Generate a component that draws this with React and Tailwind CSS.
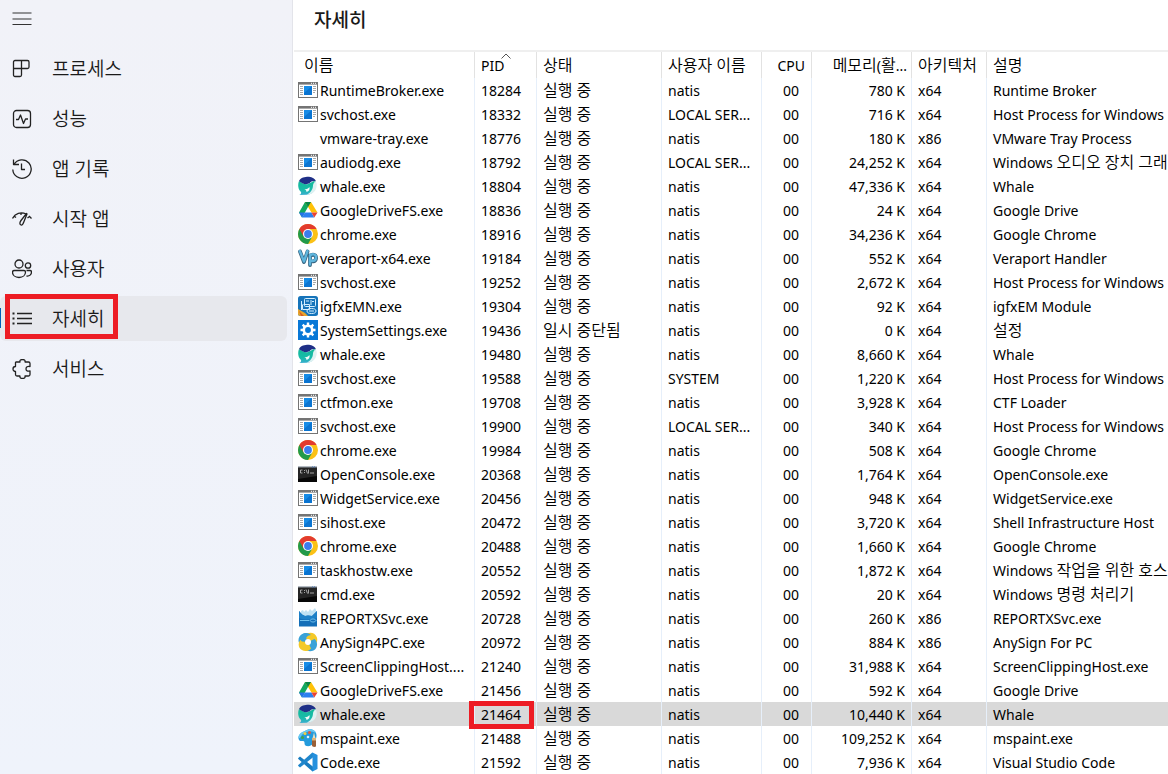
import React from "react";

function AppIcon({ kind }) {
  const common = { width: 20, height: 20, viewBox: "0 0 20 20", className: "block shrink-0", "aria-hidden": true };
  switch (kind) {
    case "exe":
      return (
        <svg {...common}>
          <rect x="0.5" y="2.5" width="19" height="15" fill="#fff" stroke="#747474" />
          <rect x="0" y="2" width="20" height="2.6" fill="#747474" />
          <path d="M13 3.3h1M15 3.3h1M17 3.3h1" stroke="#fff" strokeWidth="1" />
          <path d="M2 6.500h3M2 8.500h3M2 10.500h3M2 12.500h3M2 14.500h3M15 6.500h3M15 8.500h3M15 10.500h3M15 12.500h2" stroke="#a8a8a8" />
          <rect x="6" y="6" width="8" height="9" fill="#0a74d1" />
          <path d="M6 6h8l-8 7z" fill="#168be6" />
        </svg>
      );
    case "whale":
      return (
        <svg {...common}>
          <defs>
            <linearGradient id="whaleBody" x1="0" y1="0" x2="0" y2="1">
              <stop offset="0" stopColor="#12b99a" />
              <stop offset="0.6" stopColor="#19bba8" />
              <stop offset="1" stopColor="#3aaed0" />
            </linearGradient>
          </defs>
          <path d="M1 5C4 7 7 9 10 8L16 5L18 6C18.500 13 15 18.800 9 18.800L1 19C2.500 18.500 3.500 17.500 3 16C-.3 13 -.3 8 1 5z" fill="url(#whaleBody)" />
          <path d="M8.500 18.800C12 17.300 14.800 14 15 9.500C15 8 16 6.500 17.500 5.500C19 7 19 9.500 18.300 12C17 16.500 13 18.900 8.500 18.800z" fill="#dff1f2" />
          <path d="M6.500 13C8.500 13.500 10.500 12.500 11.500 11C12 13.500 11 15.500 8.500 16C8.500 14.800 7.800 13.800 6.500 13z" fill="#f4fbfb" />
          <path d="M1 5C3 1.300 7.500 .7 11 .8C14.500 1 17 3 18 5.300C15 4.500 13 5.500 11.500 7.300C8.500 9 4 8 1 5z" fill="#1f2f87" />
        </svg>
      );
    case "drive":
      return (
        <svg {...common}>
          <path d="M7 2L13 2L10 7L4 17.500L1 12.500z" fill="#12a861" />
          <path d="M7 2h6l6.500 10.500h-6z" fill="#ffc107" />
          <path d="M1 12.500L4 17.500L7 12.500z" fill="#2673e8" />
          <path d="M7 12.500h6.500L16.300 17.500H4z" fill="#2d7ff0" />
          <path d="M13.500 12.500h6L16.300 17.500z" fill="#ea4335" />
          <path d="M7 2h6l-3 5z" fill="#078646" />
        </svg>
      );
    case "chrome":
      return (
        <svg {...common}>
          <circle cx="10" cy="10" r="10" fill="#fbc116" />
          <path d="M10 10L14.330 12.500L10 20A10 10 0 0 1 1.340 5z" fill="#229a4a" />
          <path d="M10 5H18.660A10 10 0 0 0 1.340 5L5.670 12.500L10 10z" fill="#e33b2e" />
          <circle cx="10" cy="10" r="5" fill="#fff" />
          <circle cx="10" cy="10" r="3.900" fill="#3b7ded" />
        </svg>
      );
    case "vp":
      return (
        <svg {...common}>
          <g fill="none" strokeLinecap="round" strokeLinejoin="round">
            <path d="M2 3.500L6 14L9.500 3.500M12 7.500V17M12 8.500C14 5.500 18.500 6.500 18 10.500C17.500 14 14 14 12 12.500" stroke="#35627e" strokeWidth="3.800" />
            <path d="M1.800 3L6 13.500L9.500 3M12 7V16.500M12 8C14 5 18.500 6 18 10C17.500 13.500 14 13.500 12 12" stroke="#5fb5dc" strokeWidth="2.400" />
          </g>
        </svg>
      );
    case "igfx":
      return (
        <svg {...common}>
          <rect width="20" height="20" rx="2.500" fill="#1674ba" />
          <path d="M0 13L7 17L10 20H2.500A2.500 2.500 0 0 1 0 17.500z" fill="#e7a52c" />
          <path d="M1 15l5 5H3z" fill="#d85a27" />
          <g fill="none" stroke="#d5efff">
            <rect x="6.500" y="2.500" width="11" height="8" rx="1" />
            <path d="M3.500 5v9M5.500 8.500h6v5h-7v-5M13 4v5M14 5.500h2M8 5h3" />
            <ellipse cx="13.500" cy="15" rx="4.500" ry="2.500" />
            <path d="M11 15h5" />
          </g>
        </svg>
      );
    case "settings":
      return (
        <svg {...common}>
          <rect width="20" height="20" fill="#0878d7" />
          <circle cx="10" cy="10" r="4.200" fill="none" stroke="#fff" strokeWidth="2.600" />
          <path d="M10 2.500v3M10 14.500v3M2.500 10h3M14.500 10h3M4.700 4.700l2.100 2.100M13.200 13.200l2.100 2.100M4.700 15.300l2.100-2.100M13.200 6.800l2.100-2.100" stroke="#fff" strokeWidth="2.400" />
        </svg>
      );
    case "console":
      return (
        <svg {...common}>
          <rect x="0" y="2" width="19" height="16" fill="#080808" />
          <path d="M0 2h19v1.500H0z" fill="#b5bcc4" />
          <path d="M14 3h1M16 3h1" stroke="#3e6eb0" />
          <path d="M19 4v8L0 15V4z" fill="#252525" />
          <path d="M4.500 6H2.500v3h2M6 6.500h1M6 8.500h1M8 5.500l1.500 4M10.500 5.500v4M12 9h4" fill="none" stroke="#c4c4c4" strokeWidth=".8" />
        </svg>
      );
    case "report":
      return (
        <svg {...common}>
          <path d="M3 6V3l2-1 1 2 2-2 2 2 2-3 2 2 3-3 1 2v10H3z" fill="#bfe2f4" />
          <path d="M1 3L4 6.500L7 8L10 7.500L14 8L19 3V18.500H1z" fill="#146fb8" />
          <path d="M1 3L4 6.500L7 8L10 7.500L14 8L19 3V10C12 12 6 12 1 10z" fill="#1e81c8" />
          <path d="M2 12.500h9M12 12.500c1-2 5-2 6 0c-1 2-5 2-6 0z" fill="none" stroke="#72c1ed" />
        </svg>
      );
    case "anysign":
      return (
        <svg {...common}>
          <path d="M10 10L3 13.500C-1 10 0 4 4.500 2C7.500 .2 11 .8 13 3L14 6z" fill="#39a2d8" />
          <path d="M10 10L7 3.500C10.500-.8 17 .5 18.700 5C20 8 19 11.500 16.500 13.500z" fill="#f4c928" />
          <path d="M10 10L16.500 7C20.500 10.500 19.500 16.500 15.500 18.500C12.500 19.800 9 19.300 7 17z" fill="#39a2d8" />
          <path d="M10 10L13 16.500C9.500 20.500 3.500 19.500 1.300 15.500C0 12.500 .8 9 3.500 6.800z" fill="#f4c928" />
          <path d="M10 10L4 9.500C1.500 8 1.500 4.500 4.500 2C7.500 .2 11 .8 13 3C9.500 3.500 8 5 7.500 8z" fill="#39a2d8" />
          <circle cx="10" cy="10" r="3" fill="#fff" />
        </svg>
      );
    case "paint":
      return (
        <svg {...common}>
          <path d="M7 3C12-1 19 2 18.500 8C18 14 14 19 8.500 18C5 17 8 13.500 5 13C2 13.500 0 12 .5 9C1 6 4 4 7 3z" fill="#249bdc" />
          <path d="M2 10c3-6 9-8 16-5c-1-4-7-5-11-2C3 4 0 7 .5 10z" fill="#68c9f2" />
          <circle cx="4.500" cy="9.500" r="1.500" fill="#44a346" />
          <circle cx="7" cy="5.500" r="1.500" fill="#f0cd43" />
          <circle cx="11.500" cy="4.500" r="1.500" fill="#e5573d" />
          <circle cx="10" cy="9" r="1.300" fill="#dff4ff" />
          <path d="M16 4.500l1.500 6h-3z" fill="#eee0bd" />
          <path d="M14 10h4v8.500c-2 1-4 0-4-1z" fill="#996039" />
          <path d="M14 10h4v2.500h-4z" fill="#deb577" />
        </svg>
      );
    case "code":
      return (
        <svg {...common}>
          <path d="M2 4.500L0 6.200L.3 7L14.500 19.500L17 17L14.500 14.200z" fill="#187cc0" />
          <path d="M14.300 .5L.3 13L0 13.800L2 15.500L14.500 5.800L17 3z" fill="#1f86cc" />
          <path d="M14.500 .5L19.500 3V17L14.500 19.500z" fill="#2490de" />
        </svg>
      );
    default:
      return <span className="size-5 shrink-0" />;
  }
}

const navPaths = {
  processes: (
    <path d="M3 1.500H15.500A1.500 1.500 0 0 1 17 3V8A1.500 1.500 0 0 1 15.500 9.500H1.500M9.500 1.500V16A1.500 1.500 0 0 1 8 17.500H3A1.500 1.500 0 0 1 1.500 16V3A1.500 1.500 0 0 1 3 1.500" />
  ),
  performance: (
    <>
      <rect x="1.500" y="1.500" width="17" height="17" rx="3" />
      <path d="M4 10.500h2.500l2-4.500 3 8.500 2-4.500H16" />
    </>
  ),
  history: (
    <>
      <path d="M1.500 .5v5h5.500M2 5.500A9.200 9.200 0 1 1 .8 10.500" />
      <path d="M9.500 4.500v6H13" />
    </>
  ),
  startup: (
    <>
      <path d="M.5 9.500C3 4.500 9 2.500 14 5M17 7L19.500 9.500M2 7L4 8.500M9 3.500v2.500M17.500 7.500L15.500 9" />
      <path d="M14.500 4.500L9 11.500C7.500 13.500 7.500 15.500 9 16C10.500 16.500 11.300 14.500 12 12.500L15 5z" />
    </>
  ),
  users: (
    <>
      <circle cx="7" cy="5" r="4" />
      <circle cx="16" cy="6.500" r="2.700" />
      <path d="M2.500 11.500h9.500c1 0 1.500.5 1.500 1.500c0 3-2.500 5.500-6.500 5.500S.5 16 .5 13C.5 12 1.500 11.500 2.500 11.500zM14.500 11.500H18c1 0 1.500.5 1.500 1.500c0 2.500-2 4.500-5 4" />
    </>
  ),
  details: (
    <>
      <path d="M5 4.500h15M5 9.500h15M5 14.500h15" />
      <path d="M.5 4.500h2M.5 9.500h2M.5 14.500h2" strokeWidth="2" />
    </>
  ),
  services: (
    <path d="M4 3H8C7.500 1.300 9 .5 10.500.5S13.500 1.300 13 3H16.500A1.500 1.500 0 0 1 18 4.500V7.500C15.500 7 14 8 14 10S15.500 12.500 18 12V15.500A1.500 1.500 0 0 1 16.500 17H13C13.500 18.700 12 19.500 10.500 19.500S7.500 18.700 8 17H5A1.500 1.500 0 0 1 3.500 15.500V12.500C2 12.500 1 11.500 1 10S2 7.500 3.500 7.500V3.500z" />
  ),
};

const navItems = [
  ["processes", "프로세스"],
  ["performance", "성능"],
  ["history", "앱 기록"],
  ["startup", "시작 앱"],
  ["users", "사용자"],
  ["details", "자세히"],
  ["services", "서비스"],
];

const N = "natis";
const L = "LOCAL SER...";
const HOST = "Host Process for Windows";

const processes = [
  ["exe", "RuntimeBroker.exe", "18284", N, "780", "x64", "Runtime Broker"],
  ["exe", "svchost.exe", "18332", L, "716", "x64", HOST],
  ["", "vmware-tray.exe", "18776", N, "180", "x86", "VMware Tray Process"],
  ["exe", "audiodg.exe", "18792", L, "24,252", "x64", "Windows 오디오 장치 그래"],
  ["whale", "whale.exe", "18804", N, "47,336", "x64", "Whale"],
  ["drive", "GoogleDriveFS.exe", "18836", N, "24", "x64", "Google Drive"],
  ["chrome", "chrome.exe", "18916", N, "34,236", "x64", "Google Chrome"],
  ["vp", "veraport-x64.exe", "19184", N, "552", "x64", "Veraport Handler"],
  ["exe", "svchost.exe", "19252", N, "2,672", "x64", HOST],
  ["igfx", "igfxEMN.exe", "19304", N, "92", "x64", "igfxEM Module"],
  ["settings", "SystemSettings.exe", "19436", N, "0", "x64", "설정", "일시 중단됨"],
  ["whale", "whale.exe", "19480", N, "8,660", "x64", "Whale"],
  ["exe", "svchost.exe", "19588", "SYSTEM", "1,220", "x64", HOST],
  ["exe", "ctfmon.exe", "19708", N, "3,928", "x64", "CTF Loader"],
  ["exe", "svchost.exe", "19900", L, "340", "x64", HOST],
  ["chrome", "chrome.exe", "19984", N, "508", "x64", "Google Chrome"],
  ["console", "OpenConsole.exe", "20368", N, "1,764", "x64", "OpenConsole.exe"],
  ["exe", "WidgetService.exe", "20456", N, "948", "x64", "WidgetService.exe"],
  ["exe", "sihost.exe", "20472", N, "3,720", "x64", "Shell Infrastructure Host"],
  ["chrome", "chrome.exe", "20488", N, "1,660", "x64", "Google Chrome"],
  ["exe", "taskhostw.exe", "20552", N, "1,872", "x64", "Windows 작업을 위한 호스"],
  ["console", "cmd.exe", "20592", N, "20", "x64", "Windows 명령 처리기"],
  ["report", "REPORTXSvc.exe", "20728", N, "260", "x86", "REPORTXSvc.exe"],
  ["anysign", "AnySign4PC.exe", "20972", N, "884", "x86", "AnySign For PC"],
  ["exe", "ScreenClippingHost....", "21240", N, "31,988", "x64", "ScreenClippingHost.exe"],
  ["drive", "GoogleDriveFS.exe", "21456", N, "592", "x64", "Google Drive"],
  ["whale", "whale.exe", "21464", N, "10,440", "x64", "Whale"],
  ["paint", "mspaint.exe", "21488", N, "109,252", "x64", "mspaint.exe"],
  ["code", "Code.exe", "21592", N, "7,936", "x64", "Visual Studio Code"],
];

/* Hangul runs are set slightly larger and lighter than the Latin text beside them. */
function Mixed({ text }) {
  return text
    .split(/([\uac00-\ud7a3][\uac00-\ud7a3 ]*)/)
    .filter(Boolean)
    .map((part, i) =>
      /[\uac00-\ud7a3]/.test(part) ? (
        <span key={i} className="text-base leading-4 font-[350]">{part}</span>
      ) : (
        part
      )
    );
}

const cell = "h-6 overflow-hidden border-r border-[#e6effa] p-0 pt-0.5 pl-1.5 whitespace-nowrap";
const numCell = "h-6 border-r border-[#e6effa] p-0 pt-0.5 text-right whitespace-nowrap";
const head = "relative h-[26px] overflow-hidden border-r border-[#e2e2e2] p-0 pt-0.5 pl-1.5 text-left font-normal whitespace-nowrap";
const numHead = "h-[26px] border-r border-[#e2e2e2] p-0 pt-0.5 text-right font-normal whitespace-nowrap";

function Row({ row }) {
  const [icon, name, pid, user, memory, arch, description, status = "실행 중"] = row;
  const selected = pid === "21464";
  return (
    <tr className={selected ? "bg-[#d9d9d9]" : ""}>
      <td className="h-6 overflow-hidden border-r border-[#e6effa] p-0 pt-0.5 pl-1 whitespace-nowrap">
        <div className="flex items-start gap-0.5">
          <AppIcon kind={icon} />
          <span>{name}</span>
        </div>
      </td>
      <td className="relative h-6 border-r border-[#e6effa] p-0 pt-0.5 pl-1.5">
        {pid}
        {selected && <span className="pointer-events-none absolute -top-px right-0.5 -bottom-[3px] -left-1.5 border-5 border-[#ed1c24]" />}
      </td>
      <td className={cell}><Mixed text={status} /></td>
      <td className={cell}>{user}</td>
      <td className={`${numCell} pr-3`}>00</td>
      <td className={`${numCell} pr-1.5`}>{memory} K</td>
      <td className={cell}>{arch}</td>
      <td className="h-6 overflow-hidden p-0 pt-0.5 pl-1.5 whitespace-nowrap"><Mixed text={description} /></td>
    </tr>
  );
}

export default function App() {
  return (
    <div className="flex h-screen overflow-hidden bg-white font-['Noto_Sans','Noto_Sans_CJK_KR',sans-serif] text-black">
      <aside className="w-[293px] shrink-0 border-r border-[#e3e4ea] bg-linear-to-b from-[#f1f2f8] to-[#eff3fb]">
        <button type="button" aria-label="Menu" className="flex h-[38px] w-11 items-center pl-3">
          <svg width="20" height="20" viewBox="0 0 20 20" fill="none" stroke="#333" strokeWidth="1.200">
            <path d="M.5 4h19M.5 10h19M.5 15.500h19" />
          </svg>
        </button>
        <nav className="mt-2 flex flex-col gap-[5px] pr-[5px]">
          {navItems.map(([id, label]) => {
            const active = id === "details";
            return (
              <button
                key={id}
                type="button"
                className={
                  active
                    ? "relative flex h-[45px] items-center gap-5 rounded-md bg-[#e7e8ed] pl-3 text-left"
                    : "flex h-[45px] items-center gap-5 rounded-md pl-3 text-left"
                }
              >
                <svg width="20" height="20" viewBox="0 0 20 20" fill="none" stroke="#222" strokeWidth="1.300" strokeLinejoin="round" className="block shrink-0" aria-hidden="true">
                  {navPaths[id]}
                </svg>
                <span className="text-[19px] leading-6 font-[350] text-[#1a1a1a]">{label}</span>
                {active && (
                  <>
                    <span className="absolute top-3 left-0 h-5 w-px bg-[#005fb8]" />
                    <span className="pointer-events-none absolute -top-0.5 left-[5px] h-[45px] w-[113px] border-5 border-[#ed1c24]" />
                  </>
                )}
              </button>
            );
          })}
        </nav>
      </aside>
      <main className="min-w-0 flex-1 overflow-hidden pl-px">
        <h1 className="flex h-[52px] items-start border-b-2 border-[#efefef] pt-2 pl-5 text-[19px] leading-6 font-medium text-[#1a1a1a]">
          자세히
        </h1>
        <table className="w-full table-fixed border-separate border-spacing-0 text-sm leading-[22px]">
          <colgroup>
            <col className="w-[181px]" />
            <col className="w-[62px]" />
            <col className="w-[125px]" />
            <col className="w-[100px]" />
            <col className="w-[50px]" />
            <col className="w-[100px]" />
            <col className="w-[75px]" />
            <col />
          </colgroup>
          <thead>
            <tr>
              <th className="h-[26px] border-r border-[#e2e2e2] p-0 pt-0.5 pl-2.5 text-left font-normal"><Mixed text="이름" /></th>
              <th className={head}>
                PID
                <svg width="10" height="6" viewBox="0 0 10 6" fill="none" stroke="#555" className="absolute top-px left-[26px]" aria-hidden="true">
                  <path d="M.5 5.500L5 1l4.500 4.500" />
                </svg>
              </th>
              <th className={head}><Mixed text="상태" /></th>
              <th className={head}><Mixed text="사용자 이름" /></th>
              <th className={`${numHead} pr-1.5`}>CPU</th>
              <th className={`${numHead} pr-1`}><Mixed text="메모리(활..." /></th>
              <th className={head}><Mixed text="아키텍처" /></th>
              <th className="h-[26px] p-0 pt-0.5 pl-1.5 text-left font-normal"><Mixed text="설명" /></th>
            </tr>
          </thead>
          <tbody>
            {processes.map((row) => (
              <Row key={row[2]} row={row} />
            ))}
          </tbody>
        </table>
      </main>
    </div>
  );
}
